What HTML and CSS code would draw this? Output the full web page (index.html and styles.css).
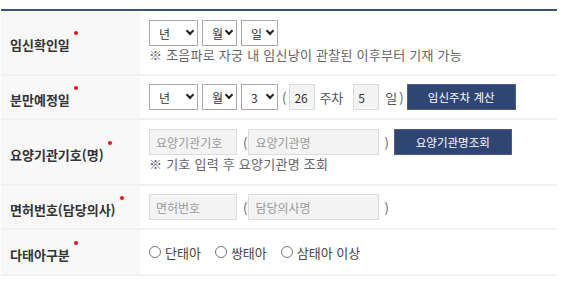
FILE: index.html
```html
<!DOCTYPE html>
<html lang="ko">
<head>
<meta charset="utf-8">
<link rel="stylesheet" href="styles.css">
</head>
<body>
<div class="wrap">
<table class="form">
  <tr class="r1">
    <th><span class="lbl">임신확인일</span><span class="req"></span></th>
    <td>
      <div class="line">
        <span class="selwrap"><select class="sel sel-y"><option>년</option></select></span>
        <span class="selwrap"><select class="sel sel-m"><option>월</option></select></span>
        <span class="selwrap last"><select class="sel sel-d"><option>일</option></select></span>
      </div>
      <p class="note">※ 조음파로 자궁 내 임신낭이 관찰된 이후부터 기재 가능</p>
    </td>
  </tr>
  <tr class="r2">
    <th><span class="lbl">분만예정일</span><span class="req"></span></th>
    <td>
      <div class="line">
        <span class="selwrap"><select class="sel sel-y"><option>년</option></select></span>
        <span class="selwrap"><select class="sel sel-m"><option>월</option></select></span>
        <span class="selwrap last"><select class="sel sel-d"><option>3</option></select></span>
        <span class="paren po">(</span>
        <input class="inp inp-num" type="text" value="26" readonly>
        <span class="unit u1">주차</span>
        <input class="inp inp-num" type="text" value="5" readonly>
        <span class="unit u2">일</span>
        <span class="paren pc">)</span>
        <button class="btn btn-calc" type="button">임신주차 계산</button>
      </div>
    </td>
  </tr>
  <tr class="r3">
    <th><span class="lbl">요양기관기호(명)</span><span class="req"></span></th>
    <td>
      <div class="line">
        <input class="inp inp-code" type="text" placeholder="요양기관기호" readonly>
        <span class="paren po2">(</span>
        <input class="inp inp-name" type="text" placeholder="요양기관명" readonly>
        <span class="paren pc2">)</span>
        <button class="btn btn-find" type="button">요양기관명조회</button>
      </div>
      <p class="note">※ 기호 입력 후 요양기관명 조회</p>
    </td>
  </tr>
  <tr class="r4">
    <th><span class="lbl">면허번호(담당의사)</span><span class="req"></span></th>
    <td>
      <div class="line">
        <input class="inp inp-code" type="text" placeholder="면허번호" readonly>
        <span class="paren po2">(</span>
        <input class="inp inp-name" type="text" placeholder="담당의사명" readonly>
        <span class="paren pc2">)</span>
      </div>
    </td>
  </tr>
  <tr class="r5">
    <th><span class="lbl">다태아구분</span><span class="req"></span></th>
    <td>
      <div class="line radios">
        <label class="rad"><span class="circle"></span>단태아</label>
        <label class="rad"><span class="circle"></span>쌍태아</label>
        <label class="rad"><span class="circle"></span>삼태아 이상</label>
      </div>
    </td>
  </tr>
</table>
</div>
</body>
</html>
```
FILE: styles.css
```css
html, body {
  margin: 0;
  padding: 0;
  background: #fff;
}
body {
  font-family: "Noto Sans CJK KR", "Noto Sans", sans-serif;
  color: #333;
}
.wrap {
  margin: 9px 0 0 1px;
  width: 556px;
}
.form {
  width: 556px;
  border-collapse: collapse;
  border-top: 2px solid #3d5178;
}
.form tr {
  border-bottom: 2px solid #f1f1f1;
}
.form th {
  width: 130px;
  background: #f8f8f8;
  text-align: left;
  vertical-align: middle;
  padding: 0 0 0 9px;
  font-weight: 600;
  font-size: 13px;
  color: #333;
  white-space: nowrap;
}
.lbl {
  vertical-align: middle;
}
.req {
  display: inline-block;
  width: 4px;
  height: 4px;
  border-radius: 50%;
  background: #f01010;
  margin-left: 4px;
  vertical-align: 13px;
}
.form td {
  padding: 0 0 0 9px;
  vertical-align: top;
  background: #fff;
}
.r1 td { padding-top: 9px; padding-bottom: 10px; height: 44px; }
.r2 td { padding-top: 8px; padding-bottom: 8px; height: 26px; }
.r3 td { padding-top: 9px; padding-bottom: 11px; height: 44px; }
.r4 td { padding-top: 8px; padding-bottom: 8px; height: 26px; }
.r5 td { padding-top: 12px; padding-bottom: 12px; height: 20px; }

.line {
  display: flex;
  align-items: center;
  height: 26px;
  font-size: 13px;
  color: #555;
}
.note {
  margin: 0;
  font-size: 13px;
  letter-spacing: 0.25px;
  line-height: 18px;
  color: #666;
  white-space: nowrap;
}
.selwrap {
  position: relative;
  display: inline-block;
  height: 26px;
  margin-right: 4px;
}
.selwrap.last {
  margin-right: 0;
}
.selwrap::after {
  content: "";
  position: absolute;
  right: 5px;
  top: 8px;
  width: 4px;
  height: 4px;
  border-right: 2px solid #222;
  border-bottom: 2px solid #222;
  transform: rotate(45deg);
  pointer-events: none;
}
.sel {
  -webkit-appearance: none;
  appearance: none;
  box-sizing: border-box;
  display: block;
  height: 26px;
  border: 1px solid #a9a9a9;
  border-radius: 0;
  background: #fff;
  font-family: inherit;
  font-size: 12px;
  color: #333;
  padding: 0 0 0 9px;
  margin: 0;
}
.sel-y { width: 49px; }
.sel-m { width: 35px; }
.sel-d { width: 37px; }

.paren {
  color: #666;
  font-size: 13px;
}
.po { margin: 0 3px 0 4px; }
.pc { margin: 0 3px 0 2px; }
.po2 { margin: 0 1px 0 6px; }
.pc2 { margin: 0 5px 0 5px; }

.inp {
  box-sizing: border-box;
  height: 26px;
  border: 1px solid #dcdcdc;
  background: #f3f3f3;
  font-family: inherit;
  font-size: 12px;
  color: #333;
  padding: 0 6px;
  margin: 0;
  outline: none;
}
.inp::placeholder {
  color: #999;
}
.inp-num { width: 26px; padding: 0 3px 0 4px; }
.inp-code { width: 88px; }
.inp-name { width: 131px; }

.unit {
  color: #555;
  font-size: 13px;
}
.u1 { margin: 0 10px 0 4px; }
.u2 { margin: 0 0 0 6px; }

.btn {
  box-sizing: border-box;
  height: 26px;
  border: 1px solid #4b5f88;
  background: #2f4574;
  color: #fff;
  font-family: inherit;
  font-size: 11.5px;
  padding: 0;
  margin: 0;
  cursor: pointer;
}
.btn-calc { width: 109px; }
.btn-find { width: 118px; }

.radios {
  height: 20px;
  font-size: 13px;
  color: #444;
}
.rad {
  display: flex;
  align-items: center;
  margin-right: 14px;
}
.circle {
  display: inline-block;
  box-sizing: border-box;
  width: 12px;
  height: 12px;
  border: 1px solid #777;
  border-radius: 50%;
  background: #fff;
  margin-right: 4px;
}
```
